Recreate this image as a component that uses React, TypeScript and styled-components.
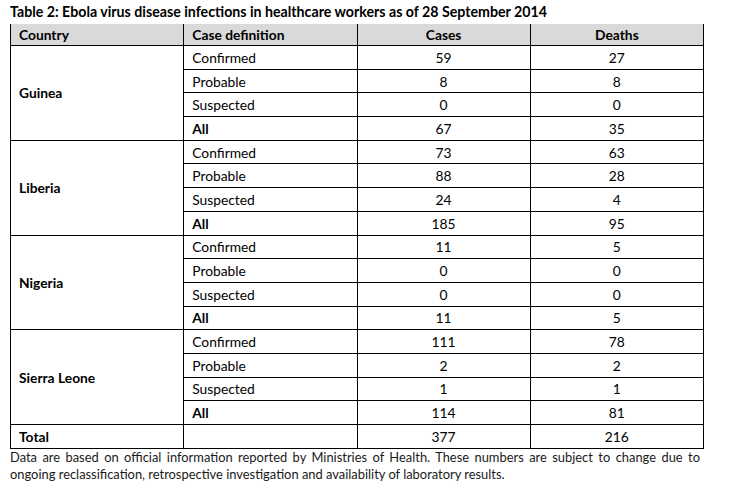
import React from "react";
import styled, { createGlobalStyle } from "styled-components";

const GlobalStyle = createGlobalStyle`
  html, body {
    margin: 0;
    padding: 0;
    background: #ffffff;
  }
  body {
    font-family: Lato, "Open Sans", "Liberation Sans", sans-serif;
    color: #000;
  }
`;

type Row = { def: string; cases: number; deaths: number };
type Group = { country: string; rows: Row[] };

const groups: Group[] = [
  {
    country: "Guinea",
    rows: [
      { def: "Confirmed", cases: 59, deaths: 27 },
      { def: "Probable", cases: 8, deaths: 8 },
      { def: "Suspected", cases: 0, deaths: 0 },
      { def: "All", cases: 67, deaths: 35 },
    ],
  },
  {
    country: "Liberia",
    rows: [
      { def: "Confirmed", cases: 73, deaths: 63 },
      { def: "Probable", cases: 88, deaths: 28 },
      { def: "Suspected", cases: 24, deaths: 4 },
      { def: "All", cases: 185, deaths: 95 },
    ],
  },
  {
    country: "Nigeria",
    rows: [
      { def: "Confirmed", cases: 11, deaths: 5 },
      { def: "Probable", cases: 0, deaths: 0 },
      { def: "Suspected", cases: 0, deaths: 0 },
      { def: "All", cases: 11, deaths: 5 },
    ],
  },
  {
    country: "Sierra Leone",
    rows: [
      { def: "Confirmed", cases: 111, deaths: 78 },
      { def: "Probable", cases: 2, deaths: 2 },
      { def: "Suspected", cases: 1, deaths: 1 },
      { def: "All", cases: 114, deaths: 81 },
    ],
  },
];

const Page = styled.div`
  width: 694px;
  padding: 4px 0 0 10px;
`;

const Title = styled.div`
  font-size: 14.2px;
  font-weight: 700;
  line-height: 16px;
  height: 20px;
  white-space: nowrap;
`;

const Table = styled.table`
  width: 694px;
  border-collapse: collapse;
  table-layout: fixed;
  font-size: 13.8px;
`;

const HeadCell = styled.th<{ $center?: boolean }>`
  background: #d9d9d9;
  height: 21px;
  padding: 0 8px;
  font-weight: 700;
  text-align: ${(p) => (p.$center ? "center" : "left")};
  border-left: 1px solid #000;
  border-right: 1px solid #000;
  border-bottom: 1px solid #000;
`;

const Cell = styled.td<{ $bold?: boolean; $center?: boolean }>`
  height: 22.7px;
  padding: 0 8px;
  font-weight: ${(p) => (p.$bold ? 700 : 400)};
  text-align: ${(p) => (p.$center ? "center" : "left")};
  vertical-align: middle;
  border: 1px solid #000;
`;

const Note = styled.div`
  width: 690px;
  font-size: 12.9px;
  line-height: 17px;
  color: #1a1a1a;
`;

const JustLine = styled.div`
  text-align: justify;
  text-align-last: justify;
`;

export default function App() {
  return (
    <>
      <GlobalStyle />
      <Page>
        <Title>
          Table 2: Ebola virus disease infections in healthcare workers as of 28 September 2014
        </Title>
        <Table>
          <thead>
            <tr>
              <HeadCell>Country</HeadCell>
              <HeadCell>Case definition</HeadCell>
              <HeadCell $center>Cases</HeadCell>
              <HeadCell $center>Deaths</HeadCell>
            </tr>
          </thead>
          <tbody>
            {groups.map((g) =>
              g.rows.map((r, i) => (
                <tr key={g.country + r.def}>
                  {i === 0 && (
                    <Cell $bold rowSpan={g.rows.length}>
                      {g.country}
                    </Cell>
                  )}
                  <Cell $bold={r.def === "All"}>{r.def}</Cell>
                  <Cell $center>{r.cases}</Cell>
                  <Cell $center>{r.deaths}</Cell>
                </tr>
              ))
            )}
            <tr>
              <Cell $bold>Total</Cell>
              <Cell />
              <Cell $center>377</Cell>
              <Cell $center>216</Cell>
            </tr>
          </tbody>
        </Table>
        <Note>
          <JustLine>
            Data are based on official information reported by Ministries of Health. These numbers are subject to change due to
          </JustLine>
          <div>
            ongoing reclassification, retrospective investigation and availability of laboratory results.
          </div>
        </Note>
      </Page>
    </>
  );
}
